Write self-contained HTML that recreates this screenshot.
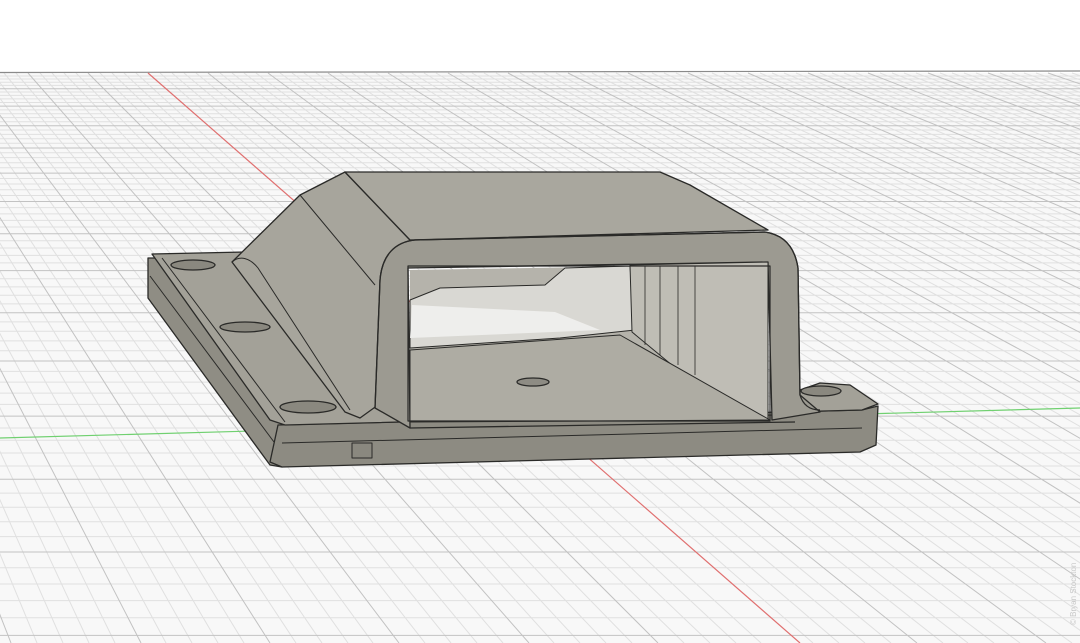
<!DOCTYPE html>
<html><head><meta charset="utf-8"><style>
html,body{margin:0;padding:0;background:#fff;width:1080px;height:643px;overflow:hidden}
svg{display:block}
</style></head><body>
<svg width="1080" height="643" viewBox="0 0 1080 643" xmlns="http://www.w3.org/2000/svg">
<rect width="1080" height="643" fill="#fff"/>
<rect y="73" width="1080" height="570" fill="#f8f8f8"/>
<g fill="none" stroke-width="1">
<path stroke="#e0e0e0" d="M0 76H1080M0 79H1080M0 82.2H1080M0 85.4H1080M0 92H1080M0 95.4H1080M0 98.9H1080M0 102.5H1080M0 109.9H1080M0 113.7H1080M0 117.6H1080M0 121.7H1080M0 130H1080M0 134.4H1080M0 138.8H1080M0 143.3H1080M0 152.8H1080M0 157.6H1080M0 162.7H1080M0 167.8H1080M0 178.5H1080M0 184H1080M0 189.7H1080M0 195.5H1080M0 207.6H1080M0 213.9H1080M0 220.4H1080M0 227H1080M0 240.8H1080M0 248H1080M0 255.4H1080M0 262.9H1080M0 278.7H1080M0 286.9H1080M0 295.3H1080M0 303.9H1080M0 321.9H1080M0 331.3H1080M0 340.9H1080M0 350.8H1080M0 371.4H1080M0 382.1H1080M0 393.1H1080M0 404.4H1080M0 428H1080M0 440.3H1080M0 453H1080M0 466H1080M0 493.1H1080M0 507.2H1080M0 521.7H1080M0 536.6H1080M0 567.8H1080M0 584H1080M0 600.6H1080M0 617.8H1080
M-200 73L37 643M-188 73L63 643M-176 73L89 643M-164 73L115 643M-140 73L166 643M-128 73L192 643M-116 73L218 643M-104 73L244 643M-80 73L296 643M-68 73L322 643M-56 73L348 643M-44 73L373 643M-20 73L425 643M-8 73L451 643M4 73L477 643M16 73L503 643M40 73L554 643M52 73L580 643M64 73L606 643M76 73L632 643M100 73L684 643M112 73L710 643M124 73L736 643M136 73L761 643M160 73L813 643M172 73L839 643M184 73L865 643M196 73L891 643M220 73L943 643M232 73L968 643M244 73L994 643M256 73L1020 643M280 73L1072 643M292 73L1098 643M304 73L1124 643M316 73L1150 643M340 73L1201 643M352 73L1227 643M364 73L1253 643M376 73L1279 643M400 73L1331 643M412 73L1356 643M424 73L1382 643M436 73L1408 643M460 73L1460 643M472 73L1486 643M484 73L1512 643M496 73L1538 643M520 73L1589 643M532 73L1615 643M544 73L1641 643M556 73L1667 643M580 73L1719 643M592 73L1744 643M604 73L1770 643M616 73L1796 643M640 73L1848 643M652 73L1874 643M664 73L1900 643M676 73L1925 643M700 73L1977 643M712 73L2003 643M724 73L2029 643M736 73L2055 643M760 73L2106 643M772 73L2132 643M784 73L2158 643M796 73L2184 643M820 73L2236 643M832 73L2262 643M844 73L2288 643M856 73L2313 643M880 73L2365 643M892 73L2391 643M904 73L2417 643M916 73L2443 643M940 73L2494 643M952 73L2520 643M964 73L2546 643M976 73L2572 643M1000 73L2624 643M1012 73L2650 643M1024 73L2675 643M1036 73L2701 643M1060 73L2753 643M1072 73L2779 643"/>
<path stroke="#c2c2c2" d="M0 88.7H1080M0 106.1H1080M0 125.8H1080M0 148H1080M0 173.1H1080M0 201.5H1080M0 233.8H1080M0 270.6H1080M0 312.8H1080M0 361H1080M0 416.1H1080M0 479.3H1080M0 552H1080M0 635.4H1080
M-212 73L11 643M-152 73L141 643M-92 73L270 643M-32 73L399 643M28 73L529 643M88 73L658 643M208 73L917 643M268 73L1046 643M328 73L1175 643M388 73L1305 643M448 73L1434 643M508 73L1563 643M568 73L1693 643M628 73L1822 643M688 73L1951 643M748 73L2081 643M808 73L2210 643M868 73L2339 643M928 73L2469 643M988 73L2598 643M1048 73L2727 643"/>
</g>
<line x1="0" y1="72.5" x2="1080" y2="71" stroke="#8a8a8a" stroke-width="1.2"/>
<line x1="148" y1="73" x2="800" y2="643" stroke="#e07070" stroke-width="1.2"/>
<line x1="0" y1="438" x2="1080" y2="408" stroke="#70d070" stroke-width="1.2"/>
<g stroke="#2a2a28" stroke-width="1.3" stroke-linejoin="round">
<polygon points="148,258 148,298 270,465 282,467 282,425 160,258" fill="#8f8d84"/>
<polygon points="278,425 862,410 878,406 876,445 860,452 282,467 270,462" fill="#8d8b82"/>
<line x1="282" y1="443" x2="862" y2="428" stroke-width="1"/>
<line x1="150" y1="276" x2="274" y2="442" stroke-width="1"/>
<polygon points="152,254 245,252 250,268 380,410 408,418 775,415 800,390 820,383 850,385 878,404 862,410 285,425 270,420" fill="#a3a198"/>
<line x1="162" y1="258" x2="285" y2="422" stroke-width="1"/>
<polygon points="232,262 300,195 345,172 410,240 385,265 378,405 360,418 345,412" fill="#a7a59c"/>
<path d="M232,262 C240,255 250,258 258,268 L350,410" fill="none" stroke-width="1"/>
<path d="M300,195 L375,285" fill="none" stroke-width="1"/>
<polygon points="345,172 660,172 690,185 768,230 410,240" fill="#a9a79e"/>
<path d="M375,408 L380,280 C382,255 395,242 415,240 L765,232 C785,235 795,248 798,268 L800,395 L820,412 L772,420 L768,262 L408,268 L410,428 Z" fill="#9c9a91"/>
<polygon points="410,270 768,264 768,420 410,420" fill="#b5b3ab" stroke="none"/>
<polygon points="410,300 440,288 545,285 565,268 630,266 635,330 560,338 410,348" fill="#d9d8d3" stroke-width="1"/>
<polygon points="412,305 555,312 600,330 410,338" fill="#eeeeec" stroke="none"/>
<polygon points="630,265 768,262 768,420 690,380 632,332" fill="#bfbdb5" stroke-width="1"/>
<g stroke-width="0.8"><line x1="645" y1="266" x2="645" y2="345"/><line x1="660" y1="266" x2="660" y2="355"/><line x1="678" y1="266" x2="678" y2="365"/><line x1="695" y1="266" x2="695" y2="375"/></g>
<polygon points="410,350 620,335 770,420 410,422" fill="#aeaca3" stroke-width="1"/>
<ellipse cx="533" cy="382" rx="16" ry="4" fill="#8e8c84"/>
<path d="M375,408 L380,280 C382,255 395,242 415,240 L765,232 C785,235 795,248 798,268 L800,395 C803,405 810,410 820,410" fill="none"/>
<rect x="408" y="266" width="362" height="155" fill="none" stroke-width="1.2"/>
<line x1="410" y1="428" x2="795" y2="422"/>
<ellipse cx="193" cy="265" rx="22" ry="5" fill="#8a887f"/>
<ellipse cx="245" cy="327" rx="25" ry="5" fill="#8a887f"/>
<ellipse cx="308" cy="407" rx="28" ry="6" fill="#8a887f"/>
<ellipse cx="821" cy="391" rx="20" ry="5" fill="#8a887f"/>
<rect x="352" y="443" width="20" height="15" fill="#8a887f" stroke-width="1"/>
</g>
<text x="0" y="0" transform="translate(1076,625) rotate(-90)" font-family="Liberation Sans, sans-serif" font-size="8" fill="#c8c8c8">© Bryan Stockton</text>
</svg>
</body></html>
